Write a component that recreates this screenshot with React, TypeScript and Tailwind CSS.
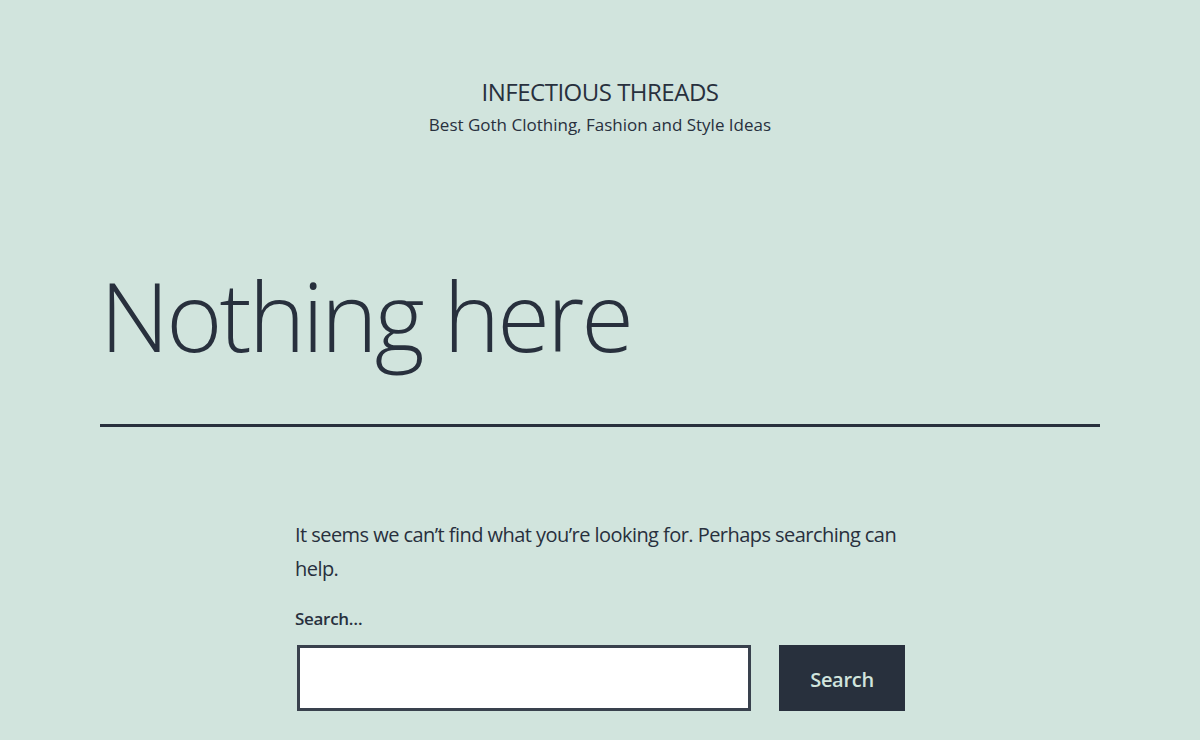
export default function App() {
  return (
    <div
      className="min-h-[740px] w-full bg-[#d1e4dd] text-[#28303d]"
      style={{ fontFamily: '"Open Sans", "Noto Sans", sans-serif' }}
    >
      <header className="flex flex-col items-center pt-[76px]">
        <p className="text-[24px] leading-[32px] tracking-[-0.5px]">INFECTIOUS THREADS</p>
        <p className="mt-[4px] text-[17px] leading-[26px]">Best Goth Clothing, Fashion and Style Ideas</p>
      </header>

      <main className="px-[100px]">
        <div className="mt-[122px] border-b-[3px] border-[#28303d] pb-[54px]">
          <h1 className="text-[96px] font-light leading-[110px] tracking-[-3px]">Nothing here</h1>
        </div>

        <div className="mx-auto mt-[91px] w-[610px]">
          <p className="text-[20px] leading-[34px] tracking-[-0.55px]">
            It seems we can’t find what you’re looking for. Perhaps searching can help.
          </p>
          <form className="mt-[20px]" onSubmit={(e) => e.preventDefault()}>
            <label className="block text-[17px] font-semibold leading-[26px] tracking-[-0.3px]">Search…</label>
            <div className="mt-[13px] flex items-stretch gap-[28px] pl-[2px]">
              <input
                type="search"
                className="h-[66px] w-[454px] border-[3px] border-[#39414d] bg-white outline-none"
              />
              <button
                type="submit"
                className="h-[66px] w-[126px] bg-[#28303d] pt-[3px] text-[20px] font-semibold tracking-[-0.3px] text-[#d1e4dd]"
              >
                Search
              </button>
            </div>
          </form>
        </div>
      </main>
    </div>
  );
}
